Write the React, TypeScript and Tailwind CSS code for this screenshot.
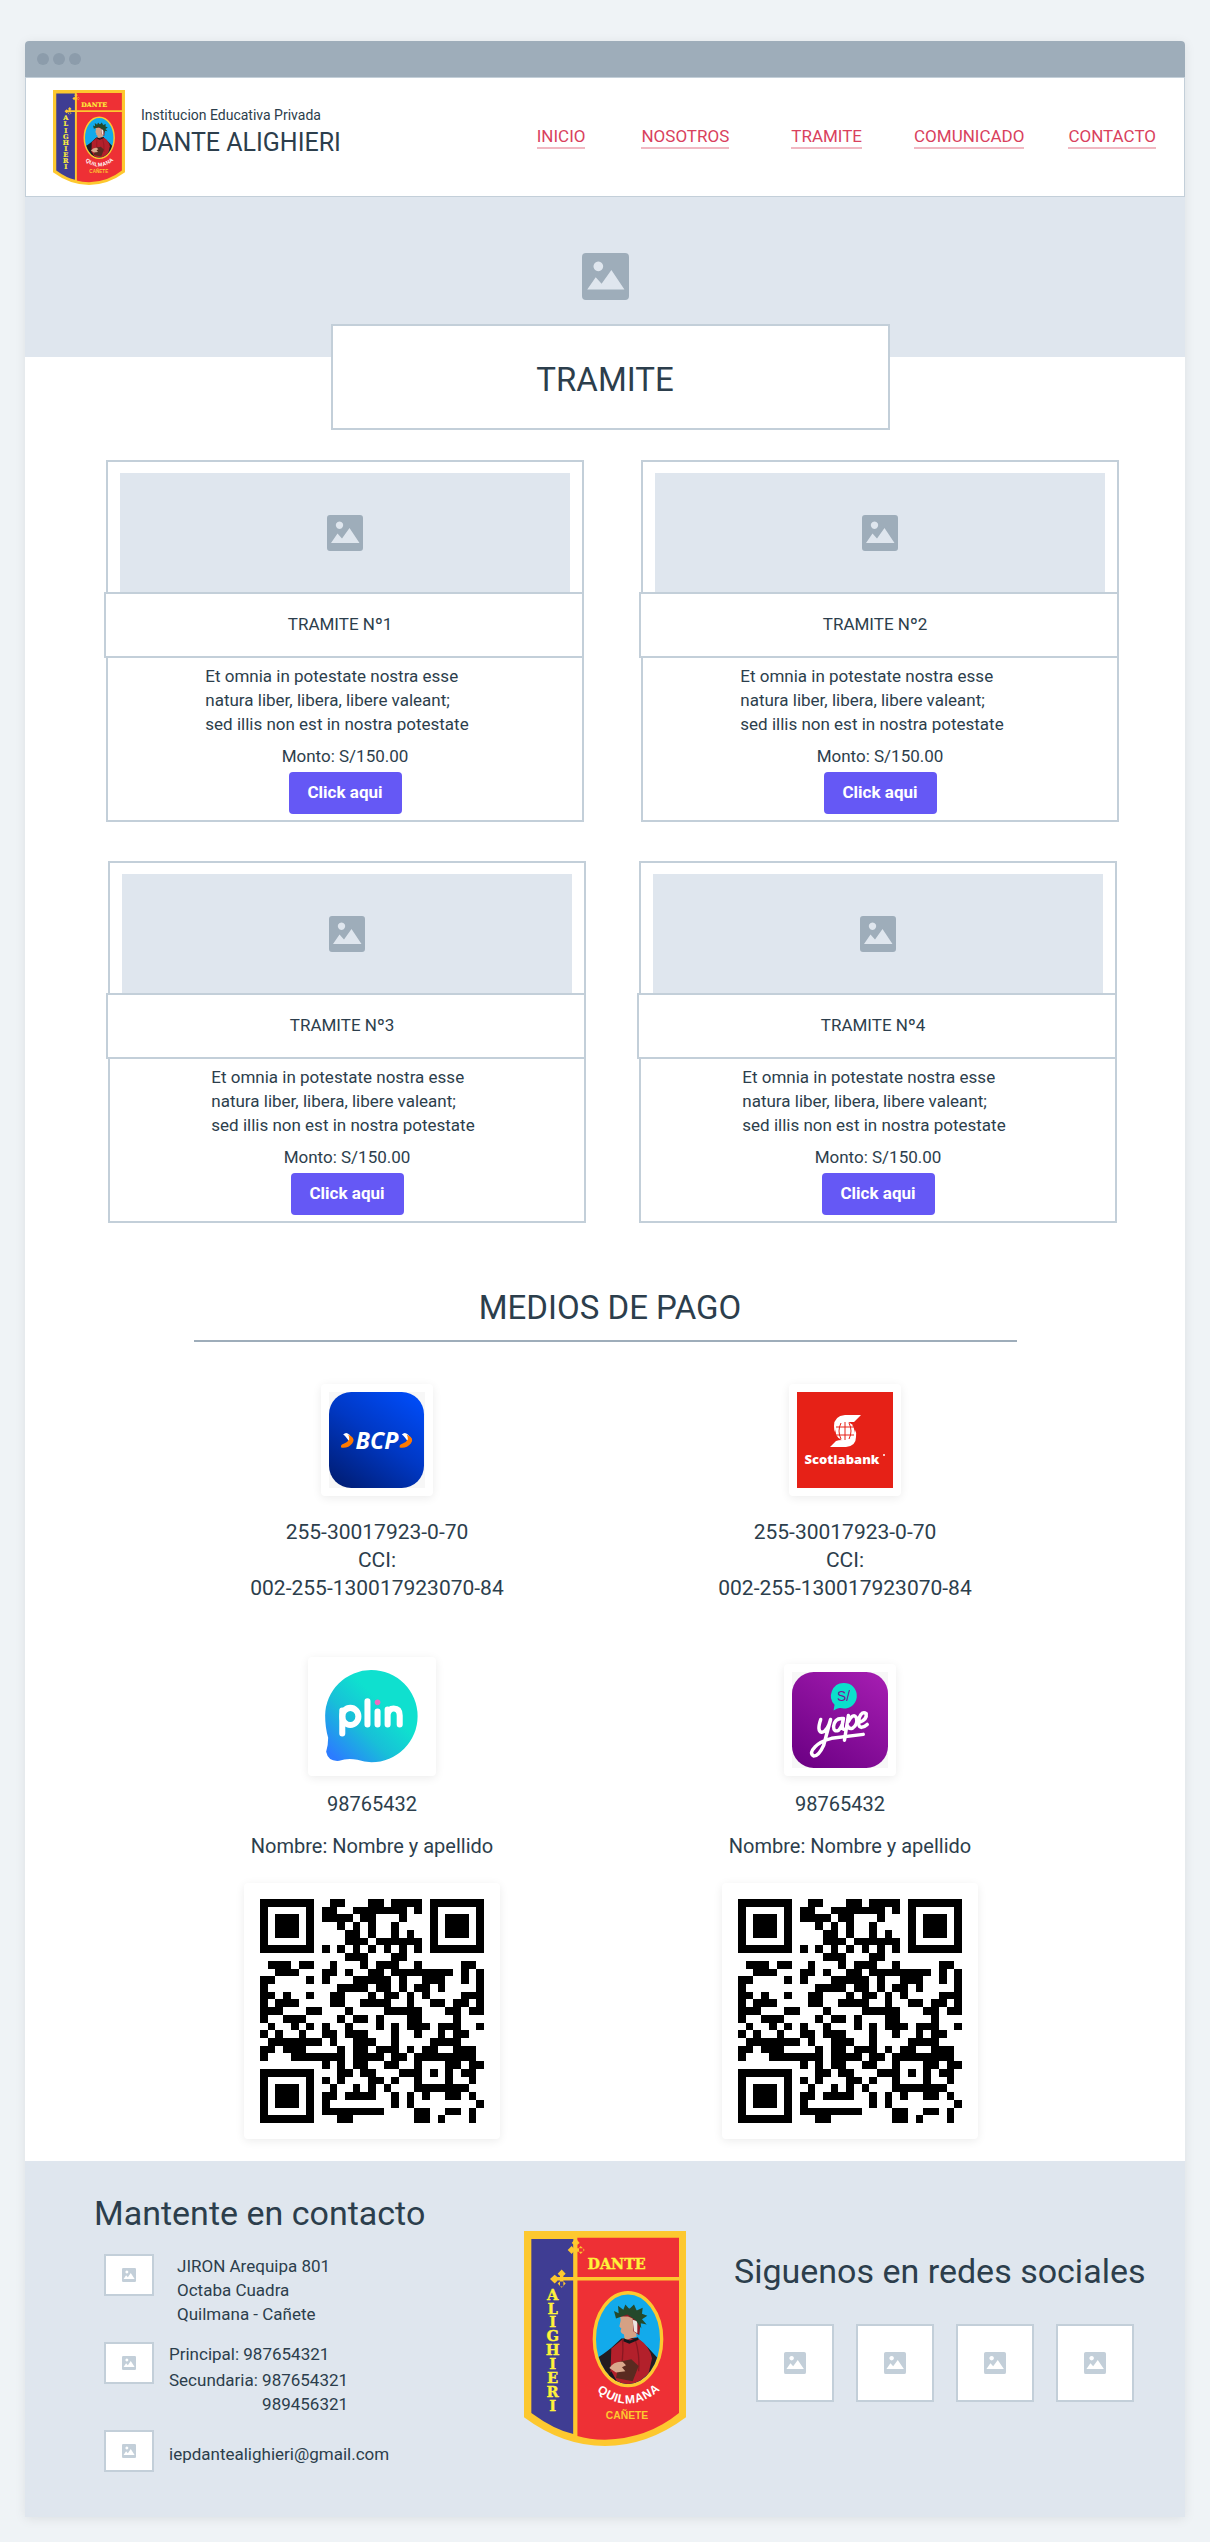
import React from "react";

const QR_ROWS = [
  "11111110011000110111101111111",
  "10000010110011111110101000001",
  "10111010111101100010001011101",
  "10111010001010100100001011101",
  "10111010000110100101001011101",
  "10000010000111011111101000001",
  "11111110101010101010101111111",
  "00000000000111000110000000000",
  "01110110010001011100100000110",
  "00111000110100110111111110101",
  "11000010100011111010011100101",
  "10000000001111011010110100001",
  "11010010011000101101010000111",
  "10111000011001111001001101101",
  "11100011000100001111100011011",
  "10011100001011010001100001000",
  "01001010100100010101110111001",
  "10100100110111000100100101100",
  "01111111010011100100001111000",
  "11011100001011011101011001110",
  "10001111111011110110111111110",
  "00000000101011001100100011011",
  "11111110001101100011101010110",
  "10000010101000110100100010010",
  "10111010010010101000111111100",
  "10111010110111100101010011010",
  "10111010100000000101000000001",
  "10000010111111110000110011010",
  "11111110001100000000110100010",
];

function QrCode() {
  return (
    <div className="rounded bg-white p-4 shadow-[0_2px_10px_rgba(0,0,0,0.08)]">
      <svg viewBox="0 0 29 29" className="block size-56" shapeRendering="crispEdges" role="img" aria-label="Codigo QR">
        {QR_ROWS.map((row, y) =>
          row.split("").map((c, x) => (c === "1" ? <rect key={`${x}-${y}`} x={x} y={y} width="1" height="1" /> : null)),
        )}
      </svg>
    </div>
  );
}

function Picture({ className }: { className: string }) {
  return (
    <svg viewBox="0 0 36 36" className={className} aria-hidden="true">
      <path
        fillRule="evenodd"
        fill="currentColor"
        d="M3 0h30a3 3 0 0 1 3 3v30a3 3 0 0 1-3 3H3a3 3 0 0 1-3-3V3a3 3 0 0 1 3-3ZM12.500 6.500a3.700 3.700 0 1 0 .01 0ZM4 28h28.500L22.500 13 15 23.500l-4.500-5Z"
      />
    </svg>
  );
}

const ALIGHIERI = "ALIGHIERI".split("");

function Crest({ id, className }: { id: string; className: string }) {
  return (
    <svg viewBox="0 0 486 644" preserveAspectRatio="none" className={className} role="img" aria-label="Escudo Dante Alighieri">
      <defs>
        <clipPath id={`${id}-oval`}>
          <ellipse cx="312" cy="324" rx="96" ry="134" />
        </clipPath>
        <path id={`${id}-arc`} d="M206 452Q312 560 420 448" />
      </defs>
      <path d="M0 0H486V558Q370 644 243 644Q116 644 0 558Z" fill="#fdc82f" />
      <path d="M22 24H148V608Q90 595 22 545Z" fill="#3f3d93" />
      <path d="M160 20H465V545Q370 622 243 625Q195 625 160 614Z" fill="#ee3035" />
      <path d="M154 30V620M90 143H470" stroke="#fdc82f" strokeWidth="11" fill="none" />
      <g fill="#fdc82f">
        <path d="M136 52h42v10h-42ZM155 22l12 14-7 5h-10l-7-5ZM131 57l12-12 5 6v12l-5 6ZM182 57l-12-12-5 6v12l5 6Z" />
        <path d="M108 120h10v46h-10ZM113 115l12 13-6 6h-12l-6-6ZM113 170l12-13-6-6h-12l-6 6ZM78 144l14-13 8 7v12l-8 7Z" />
      </g>
      <text x="278" y="114" textAnchor="middle" className="font-['DejaVu_Serif',serif] font-bold" fontSize="43" fill="#fff23a" stroke="#fff23a" strokeWidth="1">DANTE</text>
      {ALIGHIERI.map((letter, i) => (
        <text key={i} x="86" y={206 + i * 41.500} textAnchor="middle" className="font-['DejaVu_Serif',serif] font-bold" fontSize="44" fill="#fff23a" stroke="#fff23a" strokeWidth="1">{letter}</text>
      ))}
      <ellipse cx="312" cy="324" rx="101" ry="139" fill="#12aaeb" stroke="#fdc82f" strokeWidth="10" />
      <g clipPath={`url(#${id}-oval)`}>
        <path d="M215 460V382Q232 375 262 350L292 322 340 320Q375 350 402 382L412 460Z" fill="#231c1f" />
        <path d="M258 460 262 352 296 324 342 322Q378 345 384 382L366 460Z" fill="#b3202b" />
        <path d="M296 324Q300 390 284 440M334 326Q348 370 344 420" stroke="#8a1822" strokeWidth="4" fill="none" />
        <path d="M290 268Q284 238 302 240L332 248 338 316 302 328 300 310Q286 305 292 292L286 286Z" fill="#d5a184" />
        <path d="M286 256Q288 232 320 232Q352 236 350 272L346 312 328 300 326 262 312 256Z" fill="#8d1a24" />
        <path d="M326 266 340 270 340 306 330 300Z" fill="#ece6e2" />
        <path d="M276 262 270 240 284 246 282 224 298 236 304 220 316 234 330 220 338 238 356 230 354 248 370 254 354 264 368 280 350 276 352 292 336 268 310 250Z" fill="#24492b" />
        <path d="M300 322 318 328 342 318 344 326 316 338 298 330Z" fill="#15181c" />
        <path d="M286 392 322 384 344 404 326 450 276 440Z" fill="#5a2a20" />
        <path d="M256 410Q272 388 296 392L306 402 294 408 304 420 276 424Z" fill="#d9a88c" />
        <path d="M230 458 262 420 282 456Z" fill="#17191d" />
      </g>
      <text className="font-['Liberation_Sans',sans-serif] font-bold" fontSize="36" fill="#fff">
        <textPath href={`#${id}-arc`} startOffset="50%" textAnchor="middle" dominantBaseline="central">QUILMANA</textPath>
      </text>
      <text x="309" y="563" textAnchor="middle" className="font-['Liberation_Sans',sans-serif] font-bold" fontSize="31" fill="#fdc82f">CAÑETE</text>
    </svg>
  );
}

function BcpLogo() {
  return (
    <svg viewBox="0 0 95 95" className="block size-24" role="img" aria-label="BCP">
      <defs>
        <linearGradient id="bcp" x1="0.2" y1="1" x2="0.9" y2="0">
          <stop offset="0" stopColor="#001f7a" />
          <stop offset="0.5" stopColor="#0038c4" />
          <stop offset="1" stopColor="#004dfa" />
        </linearGradient>
      </defs>
      <rect width="95" height="95" fill="#f7f7f7" />
      <rect width="94" height="95" rx="22" fill="url(#bcp)" />
      {[0, 58].map((dx) => (
        <g key={dx} transform={`translate(${dx} 0)`}>
          <path d="M14 42q3-3 6 0l4 5-4 2q-4-6-6-7Z" fill="#fff" />
          <path d="M19 42q8 4 4 9-4 5-11 4-1-3 3-4 4-2 5-4 0-3-1-5Z" fill="#ff7a00" />
        </g>
      ))}
      <text x="47.500" y="56" textAnchor="middle" className="font-['Open_Sans',sans-serif] font-bold italic" fontSize="23" fill="#fff">BCP</text>
    </svg>
  );
}

function ScotiabankLogo() {
  return (
    <svg viewBox="0 0 96 96" className="block size-24" role="img" aria-label="Scotiabank">
      <rect width="96" height="96" fill="#e62117" />
      <path d="M64 23H48Q37 24 37 34Q37 38 38 40Q40 31 50 30Q55 30 57 30Z" fill="#fff" />
      <path d="M33 55H49Q59 54 59 45Q60 41 58 38Q56 48 46 48Q41 48 39 49Z" fill="#fff" />
      <circle cx="48" cy="39" r="9.500" fill="#fff" />
      <path d="M48 30v18M39 35h18M39 43h18M44 31q-4 8 0 16M52 31q4 8 0 16" stroke="#e62117" strokeWidth="1" fill="none" />
      <text x="45" y="72" textAnchor="middle" className="font-['Open_Sans',sans-serif] font-extrabold" fontSize="13" fill="#fff">Scotiabank</text>
      <circle cx="87" cy="63" r="1" fill="#fff" />
    </svg>
  );
}

function PlinLogo() {
  return (
    <svg viewBox="0 0 127 118" className="block w-32" role="img" aria-label="plin">
      <defs>
        <linearGradient id="plin" x1="0.1" y1="0.95" x2="0.65" y2="0.4">
          <stop offset="0" stopColor="#2b7cff" />
          <stop offset="0.55" stopColor="#18bfd8" />
          <stop offset="1" stopColor="#0fe0cf" />
        </linearGradient>
      </defs>
      <path d="M63 13A45.500 45.500 0 0 1 63 104.500Q56 104 49 102Q39 100 31 103Q20 104 18 94Q20 88 20 80Q17 70 17 58A45.500 45.500 0 0 1 63 13Z" fill="url(#plin)" />
      <g stroke="#fff" strokeWidth="6" strokeLinecap="round" fill="none">
        <path d="M34 76V53M59 44V67M69 54V67M79 67V52M79 57Q80 51 85 51Q91 51 91 58V67" />
        <ellipse cx="42" cy="59" rx="8" ry="8.500" />
      </g>
      <circle cx="69" cy="45" r="2.800" fill="#f06cc0" />
    </svg>
  );
}

function YapeLogo() {
  return (
    <svg viewBox="0 0 97 97" className="block size-24" role="img" aria-label="yape">
      <defs>
        <linearGradient id="yape" x1="0.1" y1="1" x2="0.8" y2="0">
          <stop offset="0" stopColor="#6c0084" />
          <stop offset="1" stopColor="#a21caf" />
        </linearGradient>
      </defs>
      <rect width="97" height="97" fill="#f7f7f7" />
      <rect width="97" height="97" rx="22" fill="url(#yape)" />
      <path d="M52 11a13 13 0 1 1-3 25.500Q46 36 42 39L43 33A13 13 0 0 1 52 11Z" fill="#0be0cc" />
      <text x="52" y="29" textAnchor="middle" className="font-['Liberation_Sans',sans-serif]" fontSize="14" fill="#7b0f94">S/</text>
      <g stroke="#fff" strokeWidth="3.500" strokeLinecap="round" strokeLinejoin="round" fill="none">
        <path d="M29 48Q25 60 30 61Q36 60 39 48L32 74Q27 85 22 85Q17 82 23 76Q28 70 40 67L72 63" />
        <path d="M52 47Q43 46 42 55Q42 61 47 59Q51 55 52 47Q49 58 53 58" />
        <path d="M57 44L53 69M57 50Q62 41 65 46Q67 53 61 57Q57 58 56 54" />
        <path d="M68 51Q76 48 75 42Q71 39 68 46Q66 55 70 56Q74 55 76 53" />
      </g>
    </svg>
  );
}

const NAV = [
  { label: "INICIO", cell: "" },
  { label: "NOSOTROS", cell: "ml-14" },
  { label: "TRAMITE", cell: "ml-[62px]" },
  { label: "COMUNICADO", cell: "ml-[52px]" },
  { label: "CONTACTO", cell: "ml-11" },
];

function ProcedureCard({ title, shifted }: { title: string; shifted?: boolean }) {
  return (
    <article className="min-w-0 border-2 border-[#c3cfd9] bg-white pb-1.5">
      <div className="mx-3 mt-[11px] flex h-[119px] items-center justify-center bg-[#dfe6ee] text-[#9eadba]">
        <Picture className="size-9" />
      </div>
      <div className="-mr-0.5 -ml-1 flex h-[66px] items-center justify-center border-2 border-[#c3cfd9] bg-white">
        <h2 className="pr-2">{title}</h2>
      </div>
      <div className="flex flex-col items-center">
        <div className={shifted ? "pr-2 pt-1.5" : "pr-4 pt-1.5"}>
          <p className="leading-6">
            Et omnia in potestate nostra esse
            <br />
            natura liber, libera, libere valeant;
            <br />
            sed illis non est in nostra potestate
          </p>
        </div>
        <p className="mt-2 leading-6">Monto: S/150.00</p>
        <button type="button" className="mt-1 h-[42px] w-[113px] rounded bg-[#6558f5] font-bold text-white">
          Click aqui
        </button>
      </div>
    </article>
  );
}

function LogoCard({ tight, children }: { tight?: boolean; children: React.ReactNode }) {
  return (
    <div className={`${tight ? "" : "p-2"} rounded bg-white shadow-[0_2px_10px_rgba(0,0,0,0.08)]`}>{children}</div>
  );
}

function Account() {
  return (
    <p className="text-center text-[21px] leading-7">
      255-30017923-0-70
      <br />
      CCI:
      <br />
      002-255-130017923070-84
    </p>
  );
}

function IconBox() {
  return (
    <div className="flex h-[42px] w-[50px] shrink-0 items-center justify-center border-2 border-[#c3cfd9] bg-white text-[#c3cfd9]">
      <Picture className="size-3.5" />
    </div>
  );
}

export default function App() {
  return (
    <div className="bg-[#eff3f6] px-[25px] pt-[41px] pb-[25px] font-['Roboto',sans-serif] text-[17px] text-[#2c3e4c]">
      <div className="rounded-t bg-white shadow-[0_2px_12px_rgba(0,0,0,0.08)]">
        <div className="flex h-9 items-center gap-1 rounded-t bg-[#9eadba] px-3">
          <span className="size-3 rounded-full bg-[#8c9cab]" />
          <span className="size-3 rounded-full bg-[#8c9cab]" />
          <span className="size-3 rounded-full bg-[#8c9cab]" />
        </div>

        <header className="flex h-[120px] items-center border border-[#c3cfd9] pr-7 pl-[27px]">
          <Crest id="crest-top" className="h-[95px] w-[72px] shrink-0" />
          <div className="ml-4 pb-3">
            <p className="text-sm leading-6">Institucion Educativa Privada</p>
            <p className="text-[25px] leading-8">DANTE ALIGHIERI</p>
          </div>
          <nav className="ml-auto flex">
            {NAV.map(({ label, cell }) => (
              <a key={label} href="#" className={`${cell} border-b-2 border-[#f0b8c2] leading-[22px] text-[#d9415d]`}>
                {label}
              </a>
            ))}
          </nav>
        </header>

        <section className="flex h-40 flex-col items-center bg-[#dfe6ee] pt-14 text-[#9eadba]">
          <Picture className="size-[47px]" />
        </section>
        <div className="relative -mt-[33px] pl-2.5">
          <div className="mx-auto flex h-[106px] w-[559px] max-w-full items-center justify-center border-2 border-[#c3cfd9] bg-white pt-1.5 pr-2.5">
            <h1 className="text-[33px]">TRAMITE</h1>
          </div>
        </div>

        <main>
          <section className="mt-[30px] px-16">
            <div className="grid grid-cols-2 gap-[57px] pr-0.5 pl-[17px]">
              <ProcedureCard title="TRAMITE Nº1" />
              <ProcedureCard title="TRAMITE Nº2" />
            </div>
            <div className="mt-[39px] grid grid-cols-2 gap-[53px] pr-1 pl-[19px]">
              <ProcedureCard title="TRAMITE Nº3" shifted />
              <ProcedureCard title="TRAMITE Nº4" shifted />
            </div>
          </section>

          <section>
            <h2 className="mx-auto mt-[63px] w-[823px] max-w-full border-b-2 border-[#9eadba] pb-[11px] pl-2.5 text-center text-[33px] leading-[43px]">
              MEDIOS DE PAGO
            </h2>
            <div className="pl-3">
              <div className="mx-auto mt-[42px] grid max-w-[936px] grid-cols-2">
                <div className="flex flex-col items-center gap-[22px]">
                  <LogoCard><BcpLogo /></LogoCard>
                  <Account />
                </div>
                <div className="flex flex-col items-center gap-[22px]">
                  <LogoCard><ScotiabankLogo /></LogoCard>
                  <Account />
                </div>
              </div>
              <div className="mx-auto mt-14 grid max-w-[956px] grid-cols-2 pb-[22px] text-xl leading-7">
                {[<PlinLogo key="plin" />, <YapeLogo key="yape" />].map((logo, i) => (
                  <div key={i} className="flex flex-col items-center">
                    <div className={i ? "flex h-[118px] items-end pr-5" : "flex h-[118px] items-end"}>
                      <LogoCard tight={!i}>{logo}</LogoCard>
                    </div>
                    <p className={i ? "mt-3.5 pr-5" : "mt-3.5"}>98765432</p>
                    <p className="mt-3.5 mb-[23px]">Nombre: Nombre y apellido</p>
                    <QrCode />
                  </div>
                ))}
              </div>
            </div>
          </section>
        </main>

        <footer className="flex min-h-[356px] bg-[#dfe6ee] pr-5 pl-[69px]">
          <section className="w-[430px] pt-[31px]">
            <h2 className="text-[34px] leading-[42px]">Mantente en contacto</h2>
            <div className="mt-5 flex gap-[23px] pl-2.5">
              <IconBox />
              <address className="leading-6 not-italic">
                JIRON Arequipa 801
                <br />
                Octaba Cuadra
                <br />
                Quilmana - Cañete
              </address>
            </div>
            <div className="mt-4 flex gap-[15px] pl-2.5">
              <IconBox />
              <div className="leading-6">
                <p className="mb-0.5">Principal: 987654321</p>
                <p className="text-right">Secundaria: 987654321<br />989456321</p>
              </div>
            </div>
            <div className="mt-3.5 flex items-center gap-[15px] pl-2.5">
              <IconBox />
              <p className="pt-2">iepdantealighieri@gmail.com</p>
            </div>
          </section>
          <Crest id="crest-foot" className="mt-[70px] h-[215px] w-[162px] shrink-0" />
          <section className="ml-12 flex-1 pt-[89px]">
            <h2 className="text-[34px] leading-[42px]">Siguenos en redes sociales</h2>
            <div className="mt-8 flex gap-[22px] pl-[22px]">
              {[0, 1, 2, 3].map((n) => (
                <div key={n} className="flex size-[78px] items-center justify-center border-2 border-[#c3cfd9] bg-white text-[#c3cfd9]">
                  <Picture className="size-[22px]" />
                </div>
              ))}
            </div>
          </section>
        </footer>
      </div>
    </div>
  );
}
